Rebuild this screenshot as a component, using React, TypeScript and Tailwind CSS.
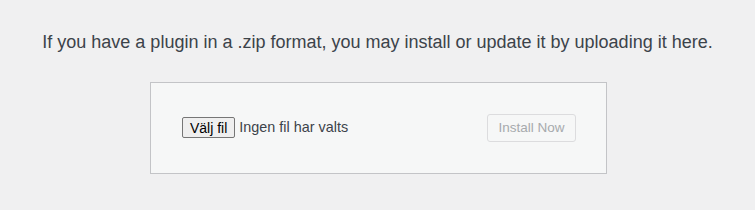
import React from 'react';

const App: React.FC = () => {
  return (
    <div className="min-h-[210px] w-full bg-[#f0f0f1] pt-[29px] font-['Liberation_Sans',Arial,sans-serif] text-[#3c434a]">
      <p className="text-center text-[18px] leading-[26px]">
        If you have a plugin in a .zip format, you may install or update it by uploading it here.
      </p>
      <form className="mx-auto mt-[27px] flex h-[92px] w-[457px] translate-x-[1px] items-center justify-between border border-[#c3c4c7] bg-[#f6f7f7] pl-[31px] pr-[30px]">
        <div className="flex items-center">
          <button
            type="button"
            className="h-[21px] rounded-[2px] border border-[#767676] bg-[#efefef] px-[7px] text-[14px] leading-[18px] text-black"
          >
            Välj fil
          </button>
          <span className="ml-[4px] text-[14.4px] text-[#3c434a]">Ingen fil har valts</span>
        </div>
        <button
          type="button"
          disabled
          className="h-[28px] w-[89px] rounded-[3px] border border-[#dcdcde] bg-[#f6f7f7] text-[13.5px] text-[#a7aaad]"
        >
          Install Now
        </button>
      </form>
    </div>
  );
};

export default App;
